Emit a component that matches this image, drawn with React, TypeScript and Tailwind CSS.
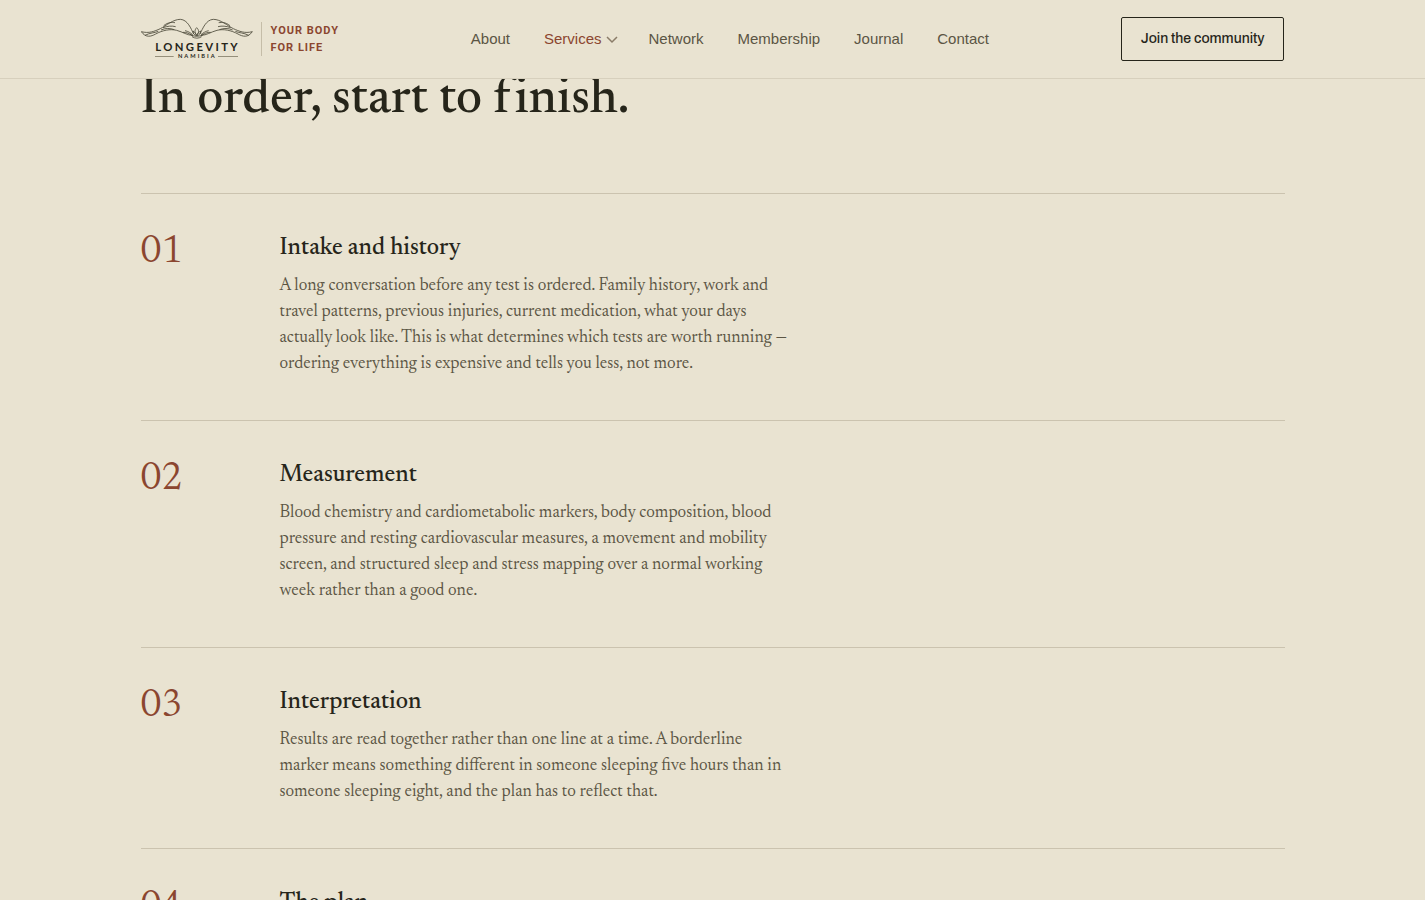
const links = ['About', 'Services', 'Network', 'Membership', 'Journal', 'Contact'];

const steps = [
  {
    number: '01',
    title: 'Intake and history',
    text: 'A long conversation before any test is ordered. Family history, work and travel patterns, previous injuries, current medication, what your days actually look like. This is what determines which tests are worth running — ordering everything is expensive and tells you less, not more.',
  },
  {
    number: '02',
    title: 'Measurement',
    text: 'Blood chemistry and cardiometabolic markers, body composition, blood pressure and resting cardiovascular measures, a movement and mobility screen, and structured sleep and stress mapping over a normal working week rather than a good one.',
  },
  {
    number: '03',
    title: 'Interpretation',
    text: 'Results are read together rather than one line at a time. A borderline marker means something different in someone sleeping five hours than in someone sleeping eight, and the plan has to reflect that.',
  },
  { number: '04', title: 'The plan', text: '' },
];

function Wing() {
  return (
    <g>
      <path d="M19 65C42 71 58 64 76 56C94 47 114 28 136 28C158 29 168 56 176 72" />
      <path d="M19 65C32 84 48 80 62 72C82 61 106 56 125 61C144 66 156 76 173 76" />
      <path d="M30 76C45 68 59 69 70 64" />
      <path d="M86 47C100 36 110 37 120 38" />
      <path d="M84 53C98 48 110 47 122 50M78 60C92 54 104 54 118 59" />
      <path d="M144 67C155 66 163 71 174 78" />
      <path d="M150 62C160 64 167 69 173 74" />
    </g>
  );
}

function Logo() {
  return (
    <svg viewBox="18 24 336 126" className="h-[42px] w-28" role="img" aria-label="Longevity Namibia">
      <g fill="none" stroke="#4b4838" strokeWidth="2.500">
        <Wing />
        <g transform="matrix(-1 0 0 1 371 0)">
          <Wing />
        </g>
        <path d="M185 53C177 61 180 70 185 76C191 70 194 61 185 53Z" />
        <path d="M174 63C174 72 179 76 185 77C192 76 197 72 197 63C191 66 188 70 185 76C182 70 179 66 174 63Z" />
        <path d="M165 72C172 81 198 81 206 72M171 80C180 86 191 86 200 80" />
      </g>
      <path d="M60 139.500H116M249 139.500H309" stroke="#69634e" strokeWidth="2" />
      <g fill="#26251a" fontFamily="Lato, sans-serif" textAnchor="middle">
        <text x="188" y="122" fontSize="34" fontWeight="700" letterSpacing="7">LONGEVITY</text>
        <text x="187" y="145" fontSize="17" fontWeight="700" letterSpacing="6">NAMIBIA</text>
      </g>
    </svg>
  );
}

export default function App() {
  return (
    <div className="h-screen overflow-x-hidden overflow-y-auto bg-[#e9e3d1] font-['Newsreader','Liberation_Serif',serif] text-[#26251a] [scrollbar-width:none]">
      <header className="sticky top-0 z-10 border-b border-[#d7d0bd] bg-[#e9e3d1] font-['Liberation_Sans',sans-serif]">
        <div className="mx-auto flex h-[78px] max-w-[1240px] items-center justify-between px-12">
          <a href="#" className="flex items-center gap-2">
            <Logo />
            <span className="border-l border-[#c5bda8] pl-[9px] font-['Roboto',sans-serif] text-[11px] leading-[17px] font-bold tracking-[1px] text-[#8b462f]">
              YOUR BODY
              <br />
              FOR LIFE
            </span>
          </a>
          <nav className="flex items-center gap-[34px] text-[15px] leading-6">
            {links.map((link) =>
              link === 'Services' ? (
                <a key={link} href="#" className="-mr-[3px] flex items-center gap-1 text-[#8b462f]">
                  {link}
                  <svg viewBox="0 0 12 12" className="size-3" fill="none" stroke="#8a7c68" strokeWidth="1.500" aria-hidden="true">
                    <path d="M1 4L6 9L11 4" />
                  </svg>
                </a>
              ) : (
                <a key={link} href="#" className="text-[#5b5544]">
                  {link}
                </a>
              ),
            )}
          </nav>
          <a
            href="#"
            className="flex h-11 items-center rounded-xs border border-[#26251a] px-[19px] font-['Archivo','Roboto',sans-serif] text-sm font-medium"
          >
            Join the community
          </a>
        </div>
      </header>

      <main className="mx-auto -mt-1.5 max-w-[1240px] px-12">
        <h2 className="mb-16 text-[51px] leading-14 font-medium [font-variant-ligatures:none]">
          In order, start to finish.
        </h2>
        <ol>
          {steps.map((step) => (
            <li
              key={step.number}
              className="grid grid-cols-[99px_minmax(0,1fr)] gap-10 border-t border-[#cbc3af] pt-[39px] pb-[42px]"
            >
              <span className="text-[38px] leading-10 text-[#8b462f]">{step.number}</span>
              <div>
                <h3 className="mb-[11px] text-2xl leading-[30px] font-medium">{step.title}</h3>
                <p className="max-w-[512px] text-[17px] leading-[26px] text-[#5b5544]">{step.text}</p>
              </div>
            </li>
          ))}
        </ol>
      </main>
    </div>
  );
}
